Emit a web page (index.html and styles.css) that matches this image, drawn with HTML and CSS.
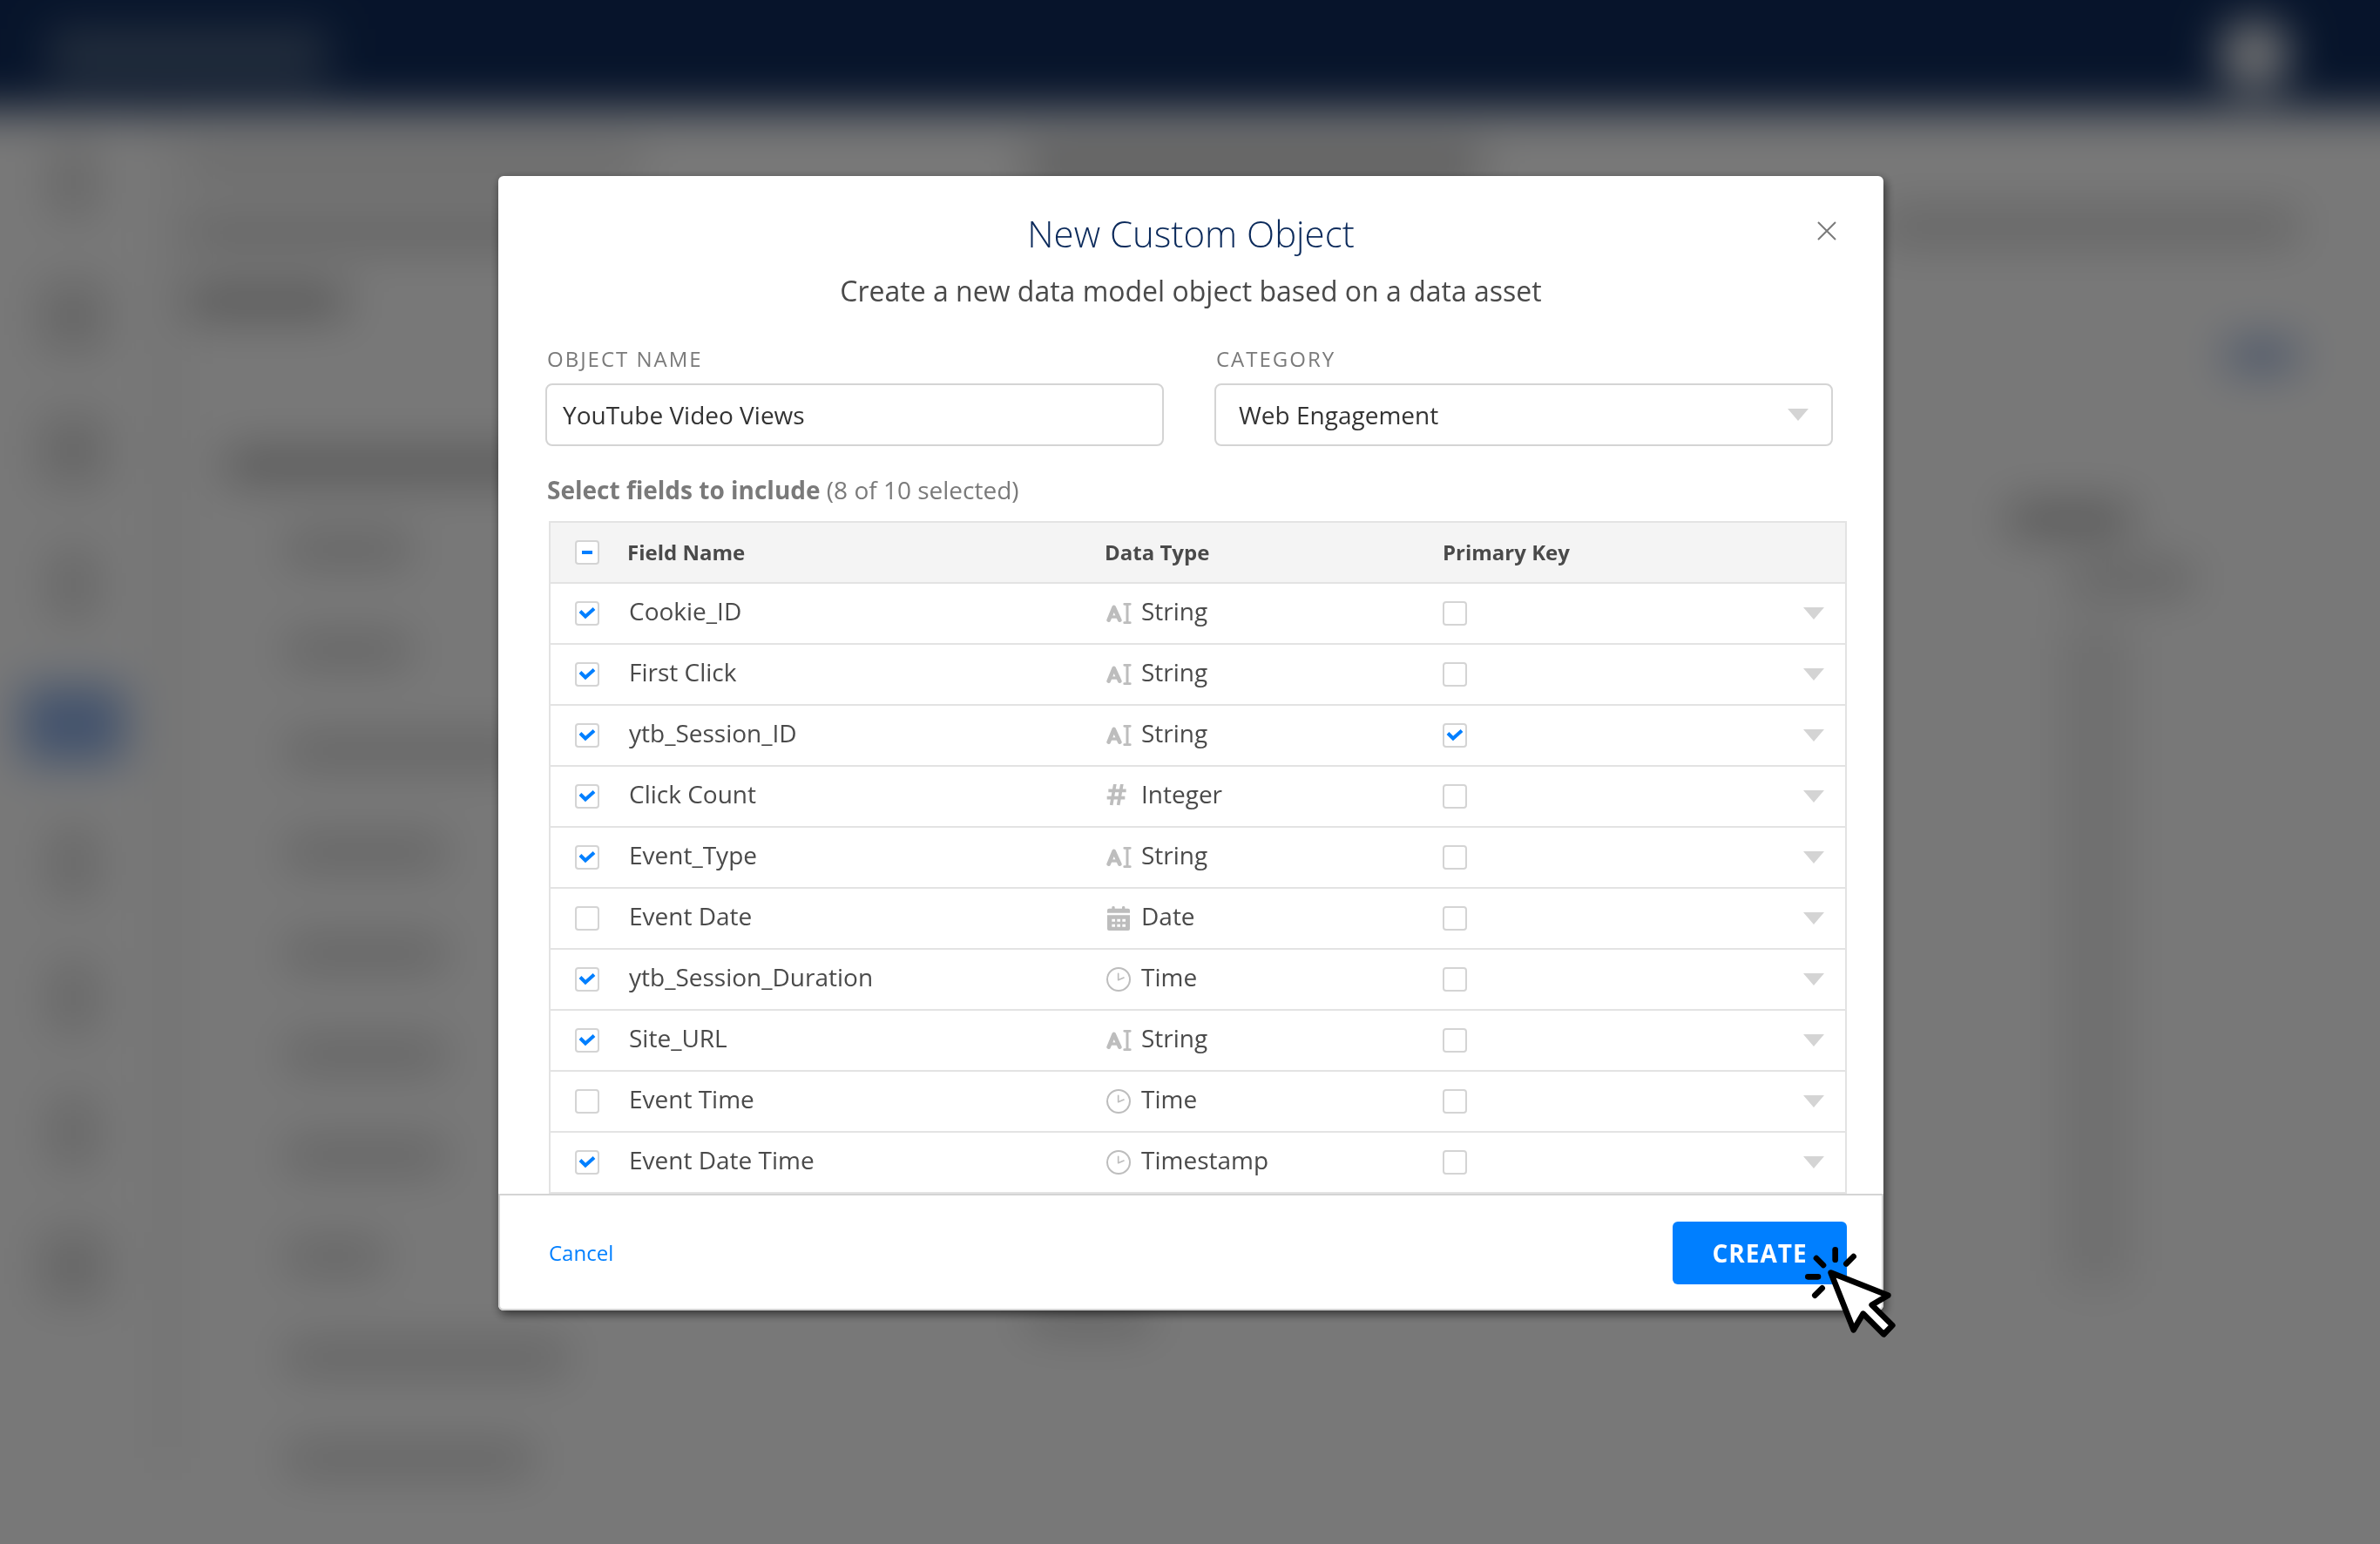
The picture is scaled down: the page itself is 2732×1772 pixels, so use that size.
FILE: index.html
```html
<!DOCTYPE html>
<html lang="en">
<head>
<meta charset="utf-8">
<meta name="viewport" content="width=device-width, initial-scale=1">
<title>New Custom Object</title>
<link rel="stylesheet" href="styles.css">
</head>
<body>
<svg class="sprite" aria-hidden="true">
  <symbol id="i-string" viewBox="90 300 90 84">
    <path d="M98 365 116 321 136 365" fill="none" stroke="currentColor" stroke-width="14" stroke-linecap="round" stroke-linejoin="round"/>
    <path d="M106 354H128" fill="none" stroke="currentColor" stroke-width="10"/>
    <path d="M162 310V374" fill="none" stroke="currentColor" stroke-width="9"/>
    <path d="M152 310H172M152 374H172" fill="none" stroke="currentColor" stroke-width="8" stroke-linecap="round"/>
  </symbol>
  <symbol id="i-integer" viewBox="90 929 90 84">
    <path d="M120 926 107 1001M144 926 131 1001M97 951H158M92 976H154" fill="none" stroke="currentColor" stroke-width="11"/>
  </symbol>
  <symbol id="i-date" viewBox="90 178 90 84">
    <path fill="currentColor" fill-rule="evenodd" d="M93 201V192Q93 186 99 186H109V182Q109 178 114 178T119 182V186H144V182Q144 178 149 178T154 182V186H165Q171 186 171 192V201ZM93 209H171V256Q171 262 165 262H99Q93 262 93 256ZM109 222V231H120V222ZM127 222V231H138V222ZM145 222V231H156V222ZM109 240V249H120V240ZM127 240V249H138V240ZM145 240V249H156V240Z"/>
  </symbol>
  <symbol id="i-time" viewBox="90 384 90 84">
    <circle cx="132" cy="426" r="39" fill="none" stroke="currentColor" stroke-width="6"/>
    <path d="M131 406V428L150 420" fill="none" stroke="currentColor" stroke-width="5" stroke-linecap="round" stroke-linejoin="round"/>
  </symbol>
  <symbol id="i-caret" viewBox="0 0 24 14"><path d="M0 0H24L12 14Z" fill="currentColor"/></symbol>
</svg>

<div class="app" aria-hidden="true">
  <div class="app-header">
    <span class="app-logo"></span>
    <span class="app-avatar"></span>
  </div>
  <div class="app-body">
    <div class="app-nav">
      <i></i><i class="wide"></i><i class="wide"></i><i></i><i class="current"></i><i></i><i></i><i></i><i class="wide"></i>
    </div>
    <div class="app-left">
      <b class="w-xxl faint"></b>
      <b class="w-xxl"></b>
      <b class="w-m strong"></b>
      <b class="w-xxl strong section"></b>
      <div class="app-list">
        <b class="w-s"></b><b class="w-s"></b><b class="w-l"></b><b class="w-m"></b><b class="w-m"></b><b class="w-m"></b><b class="w-m"></b><b class="w-xs"></b><b class="w-xl"></b><b class="w-l"></b>
      </div>
    </div>
    <div class="app-mid">
      <b class="w-xxl strong"></b>
      <b class="w-s"></b>
    </div>
    <div class="app-right">
      <b class="w-full"></b>
      <b class="link"></b>
      <b class="w-s strong"></b>
      <b class="w-s shifted"></b>
      <div class="app-column"></div>
    </div>
  </div>
</div>

<div class="scrim">
  <form class="modal" role="dialog" aria-modal="true" aria-labelledby="modal-title">
    <header class="modal-header">
      <h1 id="modal-title">New Custom Object</h1>
      <p>Create a new data model object based on a data asset</p>
      <button type="button" class="close" aria-label="Close">
        <svg viewBox="0 0 22 22" width="22" height="22"><path d="M1 1 21 21M21 1 1 21" stroke="currentColor" stroke-width="2"/></svg>
      </button>
    </header>

    <div class="form-row">
      <div class="field">
        <label for="object-name">OBJECT NAME</label>
        <input id="object-name" type="text" value="YouTube Video Views">
      </div>
      <div class="field">
        <label for="category">CATEGORY</label>
        <select id="category"><option>Web Engagement</option></select>
      </div>
    </div>

    <p class="summary"><strong>Select fields to include</strong> (8 of 10 selected)</p>

    <table class="fields">
      <colgroup><col class="c-check"><col class="c-name"><col class="c-type"><col><col class="c-more"></colgroup>
      <thead>
        <tr>
          <th class="pick"><input type="checkbox" class="mixed" aria-label="Select all fields"></th>
          <th scope="col">Field Name</th>
          <th scope="col">Data Type</th>
          <th scope="col">Primary Key</th>
          <th></th>
        </tr>
      </thead>
      <tbody>
        <tr>
          <td class="pick"><input type="checkbox" id="f1" checked></td>
          <td><label for="f1">Cookie_ID</label></td>
          <td><div class="type"><svg><use href="#i-string"/></svg><span>String</span></div></td>
          <td><input type="checkbox" aria-label="Cookie_ID is primary key"></td>
          <td><button type="button" class="more" aria-label="Options for Cookie_ID"><svg><use href="#i-caret"/></svg></button></td>
        </tr>
        <tr>
          <td class="pick"><input type="checkbox" id="f2" checked></td>
          <td><label for="f2">First Click</label></td>
          <td><div class="type"><svg><use href="#i-string"/></svg><span>String</span></div></td>
          <td><input type="checkbox" aria-label="First Click is primary key"></td>
          <td><button type="button" class="more" aria-label="Options for First Click"><svg><use href="#i-caret"/></svg></button></td>
        </tr>
        <tr>
          <td class="pick"><input type="checkbox" id="f3" checked></td>
          <td><label for="f3">ytb_Session_ID</label></td>
          <td><div class="type"><svg><use href="#i-string"/></svg><span>String</span></div></td>
          <td><input type="checkbox" checked aria-label="ytb_Session_ID is primary key"></td>
          <td><button type="button" class="more" aria-label="Options for ytb_Session_ID"><svg><use href="#i-caret"/></svg></button></td>
        </tr>
        <tr>
          <td class="pick"><input type="checkbox" id="f4" checked></td>
          <td><label for="f4">Click Count</label></td>
          <td><div class="type"><svg><use href="#i-integer"/></svg><span>Integer</span></div></td>
          <td><input type="checkbox" aria-label="Click Count is primary key"></td>
          <td><button type="button" class="more" aria-label="Options for Click Count"><svg><use href="#i-caret"/></svg></button></td>
        </tr>
        <tr>
          <td class="pick"><input type="checkbox" id="f5" checked></td>
          <td><label for="f5">Event_Type</label></td>
          <td><div class="type"><svg><use href="#i-string"/></svg><span>String</span></div></td>
          <td><input type="checkbox" aria-label="Event_Type is primary key"></td>
          <td><button type="button" class="more" aria-label="Options for Event_Type"><svg><use href="#i-caret"/></svg></button></td>
        </tr>
        <tr>
          <td class="pick"><input type="checkbox" id="f6"></td>
          <td><label for="f6">Event Date</label></td>
          <td><div class="type"><svg><use href="#i-date"/></svg><span>Date</span></div></td>
          <td><input type="checkbox" aria-label="Event Date is primary key"></td>
          <td><button type="button" class="more" aria-label="Options for Event Date"><svg><use href="#i-caret"/></svg></button></td>
        </tr>
        <tr>
          <td class="pick"><input type="checkbox" id="f7" checked></td>
          <td><label for="f7">ytb_Session_Duration</label></td>
          <td><div class="type"><svg><use href="#i-time"/></svg><span>Time</span></div></td>
          <td><input type="checkbox" aria-label="ytb_Session_Duration is primary key"></td>
          <td><button type="button" class="more" aria-label="Options for ytb_Session_Duration"><svg><use href="#i-caret"/></svg></button></td>
        </tr>
        <tr>
          <td class="pick"><input type="checkbox" id="f8" checked></td>
          <td><label for="f8">Site_URL</label></td>
          <td><div class="type"><svg><use href="#i-string"/></svg><span>String</span></div></td>
          <td><input type="checkbox" aria-label="Site_URL is primary key"></td>
          <td><button type="button" class="more" aria-label="Options for Site_URL"><svg><use href="#i-caret"/></svg></button></td>
        </tr>
        <tr>
          <td class="pick"><input type="checkbox" id="f9"></td>
          <td><label for="f9">Event Time</label></td>
          <td><div class="type"><svg><use href="#i-time"/></svg><span>Time</span></div></td>
          <td><input type="checkbox" aria-label="Event Time is primary key"></td>
          <td><button type="button" class="more" aria-label="Options for Event Time"><svg><use href="#i-caret"/></svg></button></td>
        </tr>
        <tr>
          <td class="pick"><input type="checkbox" id="f10" checked></td>
          <td><label for="f10">Event Date Time</label></td>
          <td><div class="type"><svg><use href="#i-time"/></svg><span>Timestamp</span></div></td>
          <td><input type="checkbox" aria-label="Event Date Time is primary key"></td>
          <td><button type="button" class="more" aria-label="Options for Event Date Time"><svg><use href="#i-caret"/></svg></button></td>
        </tr>
      </tbody>
    </table>

    <footer class="modal-footer">
      <a href="#" class="cancel">Cancel</a>
      <button type="submit" class="create">CREATE</button>
      <svg class="pointer" viewBox="630 441 330 330" aria-hidden="true">
        <path d="M740 460V494" fill="none" stroke="#000" stroke-width="20" stroke-linecap="round"/>
        <path d="M675 489 699 513M803 483 778 508M646 553H681M695 592 670 617" fill="none" stroke="#000" stroke-width="20" stroke-linecap="round"/>
        <path d="M725 539 922 617 866 650 937 720 907 751 836 680 803 736Z" fill="#fff" stroke="#000" stroke-width="20" stroke-linejoin="round"/>
      </svg>
    </footer>
  </form>
</div>
</body>
</html>
```
FILE: styles.css
```css
* {
  box-sizing: border-box;
}

body {
  margin: 0;
  min-height: 100vh;
  background: #fff;
  color: #4a4a4a;
  font-family: "Open Sans", "Noto Sans", sans-serif;
  font-size: 28px;
  line-height: 40px;
}

h1,
p {
  margin: 0;
}

input,
select,
button {
  font: inherit;
  color: inherit;
}

svg {
  display: block;
}

.sprite {
  position: absolute;
  width: 0;
  height: 0;
}

/* Application page behind the dialog; it bleeds past the window so the blur has no edge */
.app {
  position: fixed;
  inset: -100px;
  overflow: hidden;
  background: #fff;
  filter: blur(26px);
}

.app-header {
  display: flex;
  align-items: center;
  justify-content: space-between;
  height: 226px;
  padding: 100px 204px 0 156px;
  background: #102c5c;
}

.app-logo {
  width: 320px;
  height: 60px;
  background: #4d6382;
}

.app-avatar {
  width: 80px;
  height: 80px;
  border-radius: 50%;
  background: #fff;
}

.app-body {
  display: flex;
  padding: 0 100px;
}

.app b {
  display: block;
  height: 32px;
  background: #ccc;
}

.app b.faint {
  background: #dcdcdc;
}

.app b.strong {
  background: #b0b0b0;
}

.w-xs { width: 110px; }
.w-s { width: 140px; }
.w-m { width: 180px; }
.w-l { width: 280px; }
.w-xl { width: 320px; }
.w-xxl { width: 520px; }
.w-full { width: 100%; }

.app-nav {
  display: flex;
  flex: none;
  flex-direction: column;
  align-items: center;
  gap: 76px;
  width: 196px;
  padding: 44px 20px 0 0;
  border-right: 8px solid #ddd;
}

.app-nav i {
  width: 48px;
  height: 78px;
  background: #d8d8d8;
}

.app-nav i.wide {
  width: 72px;
}

.app-nav i.current {
  width: 120px;
  height: 90px;
  background: #8fb0e6;
}

.app-left {
  display: flex;
  flex: none;
  flex-direction: column;
  gap: 48px;
  width: 984px;
  padding: 44px 0 0 20px;
}

.app-left .section {
  margin: 108px 0 16px 44px;
}

.app-list {
  display: flex;
  flex-direction: column;
  gap: 84px;
  padding-left: 114px;
}

.app-mid {
  display: flex;
  flex: none;
  flex-direction: column;
  gap: 1288px;
  width: 960px;
  padding-top: 48px;
}

.app-right {
  display: flex;
  flex: 1;
  flex-direction: column;
  gap: 36px;
  padding: 118px 96px 0 20px;
}

.app b.link {
  align-self: flex-end;
  width: 80px;
  margin: 80px 0 120px;
  background: #8fabdc;
}

.app-right .w-s {
  margin-left: 146px;
}

.app-right .shifted {
  margin-left: 216px;
}

.app-column {
  width: 80px;
  height: 760px;
  margin-left: 206px;
  background: #ebebeb;
}

/* Dialog */
.scrim {
  position: relative;
  min-height: 100vh;
  padding: 202px 32px 64px 34px;
  background: rgba(0, 0, 0, 0.53);
}

.modal {
  width: 100%;
  max-width: 1590px;
  margin: 0 auto;
  border-radius: 6px;
  background: #fff;
  box-shadow: 2px 4px 12px rgba(0, 0, 0, 0.6);
}

.modal-header {
  position: relative;
  padding: 36px 96px 0;
  text-align: center;
}

.modal-header h1 {
  color: #0b2a5b;
  font-size: 42px;
  font-weight: 300;
  line-height: 60px;
}

.modal-header p {
  margin-top: 12px;
  font-size: 32px;
  line-height: 48px;
}

.close {
  position: absolute;
  top: 42px;
  right: 44px;
  padding: 10px;
  border: 0;
  background: none;
  color: #7a7a7a;
}

.form-row {
  display: grid;
  grid-template-columns: 1fr 1fr;
  gap: 58px;
  padding: 38px 58px 0 54px;
}

.field label {
  display: block;
  margin: 0 0 12px 2px;
  color: #7a7a7a;
  font-size: 24px;
  line-height: 32px;
  letter-spacing: 2px;
}

.field input,
.field select {
  display: block;
  width: 100%;
  height: 72px;
  padding: 0 18px;
  border: 2px solid #d4d4d4;
  border-radius: 8px;
  background: #fff;
  color: #333;
}

.field select {
  appearance: none;
  padding: 0 26px;
  background: #fff url("data:image/svg+xml,%3Csvg xmlns='http://www.w3.org/2000/svg' width='24' height='14'%3E%3Cpath d='M0 0H24L12 14Z' fill='%23d4d4d4'/%3E%3C/svg%3E") no-repeat right 26px center;
}

.summary {
  padding: 30px 56px 16px;
  color: #7a7a7a;
}

.fields {
  width: calc(100% - 100px);
  margin-left: 58px;
  border: 2px solid #e3e3e3;
  border-bottom: 0;
  border-spacing: 0;
  table-layout: fixed;
}

.c-check { width: 88px; }
.c-name { width: 548px; }
.c-type { width: 388px; }
.c-more { width: 80px; }

.fields th,
.fields td {
  height: 70px;
  padding: 0;
  border-bottom: 2px solid #e3e3e3;
  text-align: left;
  vertical-align: middle;
}

.fields th {
  background: #f4f4f4;
  font-size: 24px;
  font-weight: 700;
}

.fields .pick {
  padding-left: 28px;
}

.fields label,
.type span {
  display: block;
  padding-bottom: 6px;
}

.fields label {
  padding-left: 2px;
}

.fields input {
  display: block;
  appearance: none;
  width: 28px;
  height: 28px;
  margin: 0;
  border: 2px solid #d4d4d4;
  border-radius: 4px;
  background: #fff center / 24px 24px no-repeat;
}

.fields input:checked {
  background-image: url("data:image/svg+xml,%3Csvg xmlns='http://www.w3.org/2000/svg' viewBox='0 0 24 24'%3E%3Cpath d='M4 9.500 10 15.500 20 6.500' fill='none' stroke='%23007fff' stroke-width='4'/%3E%3C/svg%3E");
}

.fields input.mixed {
  background-image: linear-gradient(#007fff, #007fff);
  background-size: 12px 4px;
}

.type {
  display: flex;
  align-items: center;
  gap: 10px;
  padding-left: 2px;
}

.type svg {
  width: 30px;
  height: 28px;
  color: #bdbdbd;
}

.more {
  display: block;
  margin-left: 24px;
  padding: 8px;
  border: 0;
  background: none;
  color: #d4d4d4;
}

.more svg {
  width: 24px;
  height: 14px;
}

.modal-footer {
  position: relative;
  display: flex;
  align-items: center;
  justify-content: space-between;
  padding: 30px 40px 28px 56px;
  border: 2px solid #d4d4d4;
  border-radius: 0 0 6px 6px;
}

.cancel {
  color: #007fff;
  font-size: 24px;
  text-decoration: none;
}

.create {
  width: 200px;
  height: 72px;
  padding: 0;
  border: 0;
  border-radius: 6px;
  background: #007fff;
  color: #fff;
  font-weight: 700;
  letter-spacing: 1px;
}

.pointer {
  position: absolute;
  right: -20px;
  bottom: -36px;
  width: 110px;
  height: 110px;
}
```
